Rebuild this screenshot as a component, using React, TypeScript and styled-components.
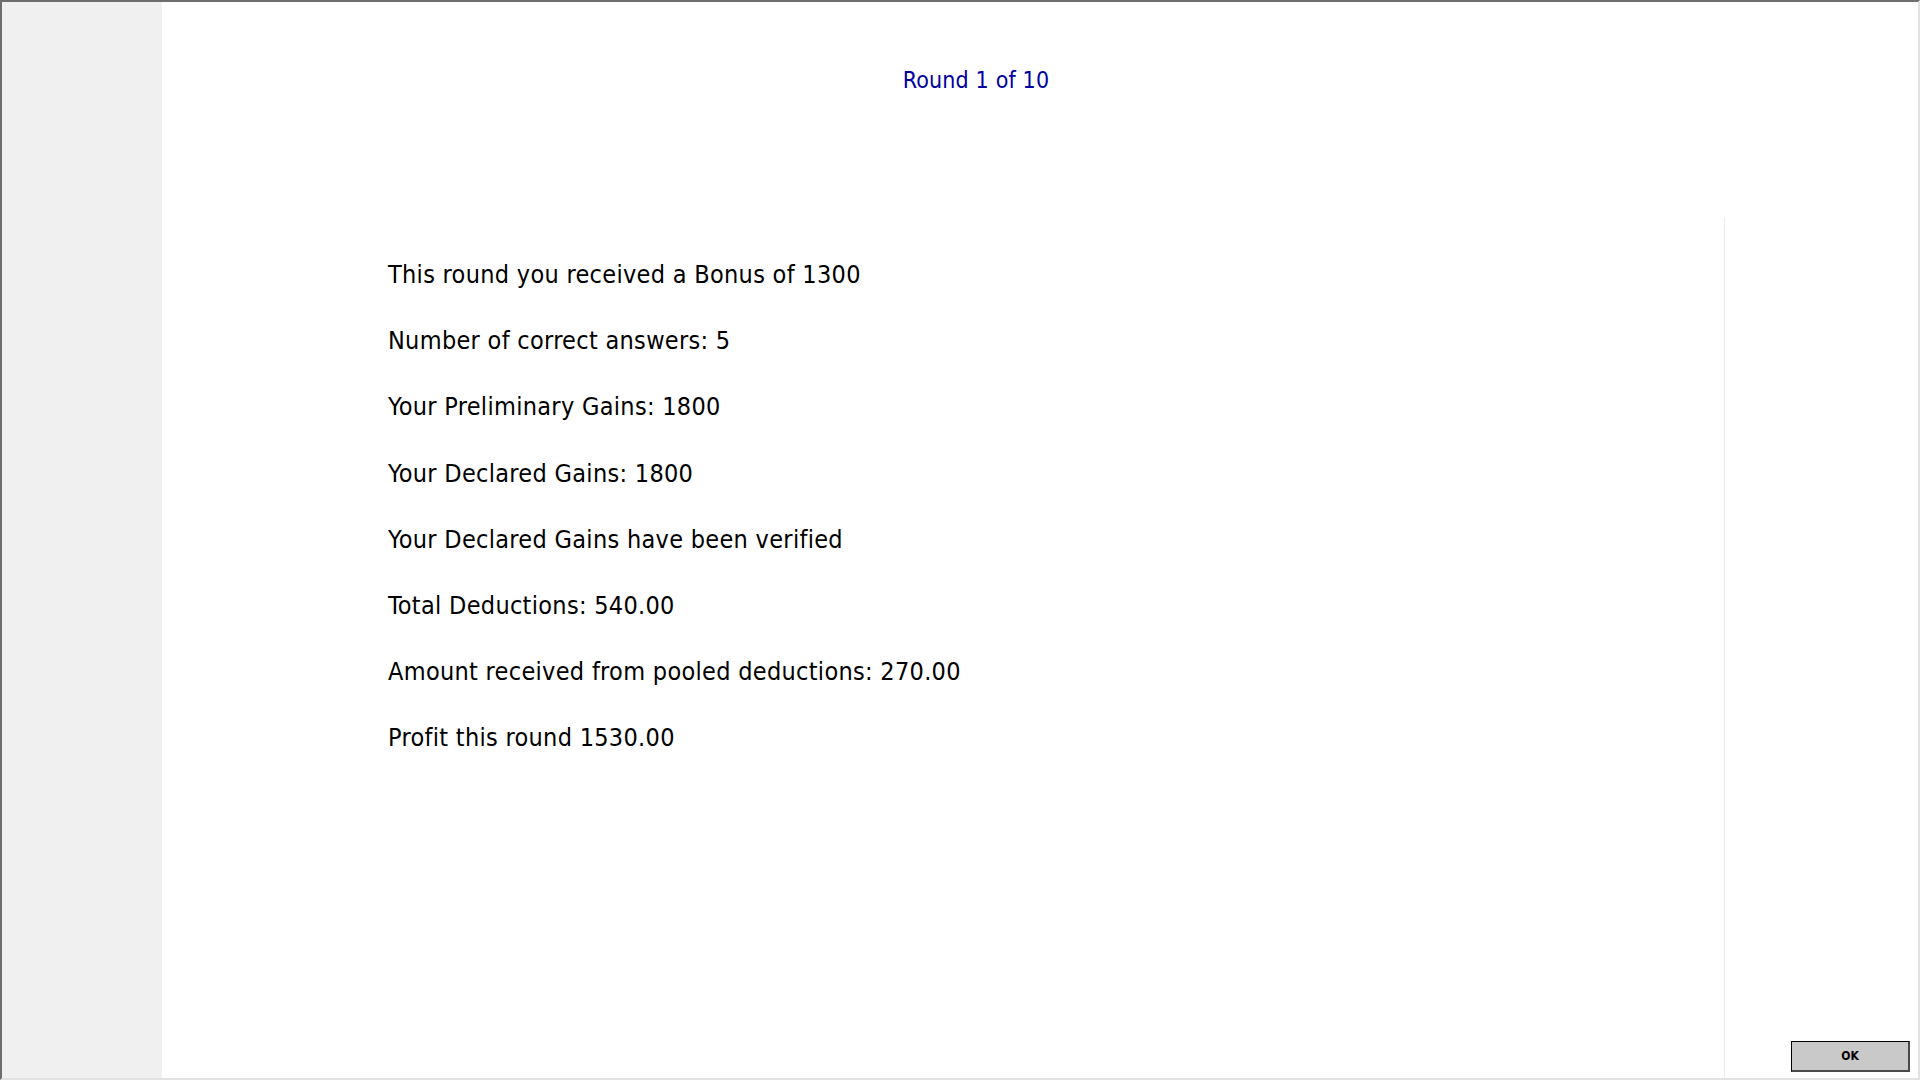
import React from "react";
import styled, { createGlobalStyle } from "styled-components";

const GlobalStyle = createGlobalStyle`
  html, body {
    margin: 0;
    padding: 0;
    background: #ffffff;
    overflow: hidden;
  }
  body {
    font-family: "DejaVu Sans Condensed", "DejaVu Sans", Tahoma, sans-serif;
  }
`;

const Frame = styled.div`
  display: flex;
  flex-direction: row;
  width: 1920px;
  height: 1080px;
  box-sizing: border-box;
  border-top: 2px solid #6e6e6e;
  border-left: 2px solid #6e6e6e;
  border-right: 2px solid #e2e2e2;
  border-bottom: 2px solid #e2e2e2;
  background: #ffffff;
`;

const Sidebar = styled.div`
  flex: none;
  width: 160px;
  background: #f0f0f0;
`;

const Main = styled.div`
  flex: 1;
  display: flex;
  flex-direction: column;
  min-width: 0;
`;

const Header = styled.div`
  flex: none;
  height: 215px;
  box-sizing: border-box;
  padding-top: 63px;
  width: 1628px;
  text-align: center;
`;

const RoundTitle = styled.span`
  font-size: 23px;
  letter-spacing: 0.15px;
  line-height: 30px;
  color: #0000a0;
`;

const Body = styled.div`
  flex: 1;
  display: flex;
  flex-direction: row;
  min-height: 0;
`;

const Results = styled.div`
  flex: none;
  width: 1563px;
  box-sizing: border-box;
  padding: 25px 0 0 226px;
  border-right: 1px solid #ececec;
`;

const ResultLine = styled.p`
  margin: 0;
  font-size: 25px;
  letter-spacing: 0.3px;
  line-height: 66.2px;
  color: #000000;
`;

const Aside = styled.div`
  flex: 1;
  display: flex;
  align-items: flex-end;
  justify-content: flex-end;
  padding: 0 8px 6px 0;
`;

const OkButton = styled.button`
  width: 119px;
  height: 31px;
  box-sizing: border-box;
  background: #c9c9c9;
  border-style: solid;
  border-width: 1px 2px 2px 1px;
  border-color: #000000 #4a4a4a #4a4a4a #000000;
  font-family: "DejaVu Sans Condensed", "DejaVu Sans", Tahoma, sans-serif;
  font-weight: bold;
  font-size: 12px;
  color: #000000;
  padding: 0;
  cursor: pointer;
`;

const lines = [
  "This round you received a Bonus of 1300",
  "Number of correct answers: 5",
  "Your Preliminary Gains: 1800",
  "Your Declared Gains: 1800",
  "Your Declared Gains have been verified",
  "Total Deductions: 540.00",
  "Amount received from pooled deductions: 270.00",
  "Profit this round 1530.00",
];

const App: React.FC = () => {
  return (
    <>
      <GlobalStyle />
      <Frame>
        <Sidebar />
        <Main>
          <Header>
            <RoundTitle>Round 1 of 10</RoundTitle>
          </Header>
          <Body>
            <Results>
              {lines.map((line) => (
                <ResultLine key={line}>{line}</ResultLine>
              ))}
            </Results>
            <Aside>
              <OkButton>OK</OkButton>
            </Aside>
          </Body>
        </Main>
      </Frame>
    </>
  );
};

export default App;
